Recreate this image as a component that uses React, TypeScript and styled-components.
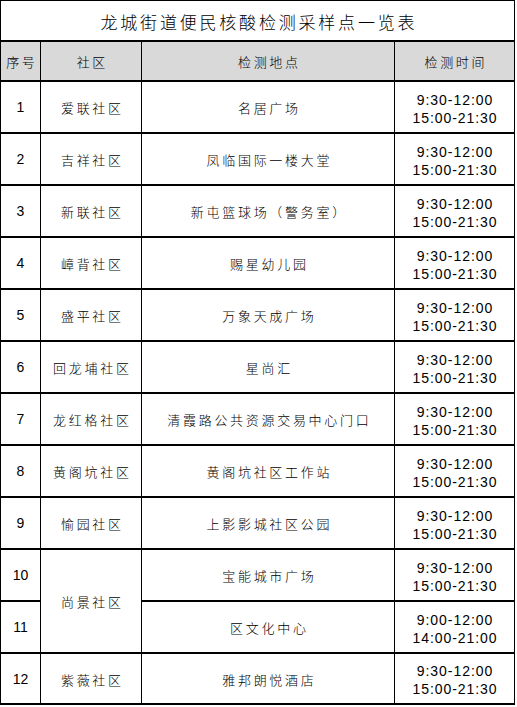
import React from "react";
import styled, { createGlobalStyle } from "styled-components";

const Global = createGlobalStyle`
  html, body { margin: 0; padding: 0; background: #ffffff; }
  body { font-family: "Noto Sans CJK SC", "Liberation Sans", sans-serif; color: #000; }
`;

const Table = styled.div`
  width: 515px;
  display: grid;
  grid-template-columns: 39px 100px 252px 119px;
  grid-template-rows: 39px 38px repeat(11, 50px) 49px;
  column-gap: 1px;
  row-gap: 2px;
  background: #000;
  padding: 1px 1px 2px 1px;
  box-sizing: border-box;
`;

const Cell = styled.div<{ $head?: boolean; $rows?: number }>`
  background: ${(p) => (p.$head ? "#d9d9d9" : "#ffffff")};
  display: flex;
  align-items: center;
  justify-content: center;
  text-align: center;
  ${(p) => (p.$rows ? `grid-row: span ${p.$rows};` : "")}
`;

const TitleCell = styled.div`
  grid-column: 1 / -1;
  background: #ffffff;
  display: flex;
  align-items: center;
  justify-content: center;
`;

const Title = styled.span`
  font-family: "Noto Sans CJK SC", sans-serif;
  font-weight: 300;
  font-size: 17px;
  letter-spacing: 2.8px;
  padding-left: 2.8px;
  line-height: 1;
  margin-top: 2px;
`;

const CjkText = styled.span`
  font-family: "Noto Sans CJK SC", sans-serif;
  font-weight: 300;
  font-size: 13px;
  letter-spacing: 2.7px;
  padding-left: 2.7px;
  line-height: 1;
  white-space: nowrap;
  padding-top: 1px;
`;

const Num = styled.span`
  font-family: "Liberation Sans", Arial, sans-serif;
  font-size: 14px;
  line-height: 1;
`;

const Times = styled.div`
  font-family: "Liberation Sans", Arial, sans-serif;
  font-size: 14px;
  letter-spacing: 0.95px;
  line-height: 18px;
  padding-left: 1px;
  padding-top: 3px;
  white-space: nowrap;
`;

type Row = { n: number; c?: string; span?: number; loc: string; t: [string, string] };

const STD: [string, string] = ["9:30-12:00", "15:00-21:30"];

const rows: Row[] = [
  { n: 1, c: "爱联社区", loc: "名居广场", t: STD },
  { n: 2, c: "吉祥社区", loc: "凤临国际一楼大堂", t: STD },
  { n: 3, c: "新联社区", loc: "新屯篮球场（警务室）", t: STD },
  { n: 4, c: "嶂背社区", loc: "赐星幼儿园", t: STD },
  { n: 5, c: "盛平社区", loc: "万象天成广场", t: STD },
  { n: 6, c: "回龙埔社区", loc: "星尚汇", t: STD },
  { n: 7, c: "龙红格社区", loc: "清霞路公共资源交易中心门口", t: STD },
  { n: 8, c: "黄阁坑社区", loc: "黄阁坑社区工作站", t: STD },
  { n: 9, c: "愉园社区", loc: "上影影城社区公园", t: STD },
  { n: 10, c: "尚景社区", span: 2, loc: "宝能城市广场", t: STD },
  { n: 11, loc: "区文化中心", t: ["9:00-12:00", "14:00-21:00"] },
  { n: 12, c: "紫薇社区", loc: "雅邦朗悦酒店", t: STD },
];

export default function App() {
  return (
    <>
      <Global />
      <Table>
        <TitleCell>
          <Title>龙城街道便民核酸检测采样点一览表</Title>
        </TitleCell>
        <Cell $head>
          <CjkText>序号</CjkText>
        </Cell>
        <Cell $head>
          <CjkText>社区</CjkText>
        </Cell>
        <Cell $head>
          <CjkText>检测地点</CjkText>
        </Cell>
        <Cell $head>
          <CjkText>检测时间</CjkText>
        </Cell>
        {rows.map((r) => (
          <React.Fragment key={r.n}>
            <Cell>
              <Num>{r.n}</Num>
            </Cell>
            {r.c && (
              <Cell $rows={r.span}>
                <CjkText>{r.c}</CjkText>
              </Cell>
            )}
            <Cell>
              <CjkText>{r.loc}</CjkText>
            </Cell>
            <Cell>
              <Times>
                {r.t[0]}
                <br />
                {r.t[1]}
              </Times>
            </Cell>
          </React.Fragment>
        ))}
      </Table>
    </>
  );
}
